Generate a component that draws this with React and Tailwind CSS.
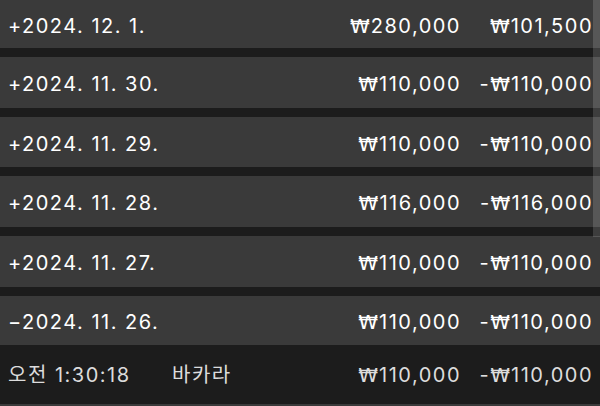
import React from 'react';

const rows = [
  { date: '+2024. 12. 1.', bet: '280,000', result: '101,500', neg: false, h: 'h-[48px]' },
  { date: '+2024. 11. 30.', bet: '110,000', result: '110,000', neg: true, h: 'h-[51px]' },
  { date: '+2024. 11. 29.', bet: '110,000', result: '110,000', neg: true, h: 'h-[50px]' },
  { date: '+2024. 11. 28.', bet: '116,000', result: '116,000', neg: true, h: 'h-[51px]' },
  { date: '+2024. 11. 27.', bet: '110,000', result: '110,000', neg: true, h: 'h-[51px]' },
  { date: '−2024. 11. 26.', bet: '110,000', result: '110,000', neg: true, h: 'h-[49px]' },
];

const font = { fontFamily: 'Inter, "Noto Sans CJK KR", sans-serif' };

const Won = () => (
  <span className="font-['DejaVu_Sans'] tracking-normal mr-[1px]">₩</span>
);

const Amounts = ({ bet, result, neg }) => (
  <>
    <div className="w-[130px] text-right">
      <Won />
      {bet}
    </div>
    <div className="w-[139px] pr-[7px] text-right">
      {neg ? '-' : ''}
      <Won />
      {result}
    </div>
  </>
);

export default function App() {
  return (
    <div
      className="relative w-[600px] h-[406px] overflow-hidden bg-[#1c1c1c] text-[20px] tracking-[1.5px]"
      style={font}
    >
      <div className="flex flex-col gap-[9px]">
        {rows.map((r, i) => (
          <div
            key={i}
            className={`${r.h} flex items-center pl-[8px] pt-[3px] bg-[#3a3a3a] text-white`}
          >
            <div className="flex-1">{r.date}</div>
            <Amounts bet={r.bet} result={r.result} neg={r.neg} />
          </div>
        ))}
      </div>

      {/* Expanded detail row */}
      <div className="h-[59px] flex items-center pl-[8px] text-[#dcdcdc]">
        <div className="w-[164px]">오전 1:30:18</div>
        <div className="flex-1">바카라</div>
        <Amounts bet="110,000" result="110,000" neg />
      </div>
      <div className="h-[3px] bg-[#3a3a3a]" />

      {/* scrollbar thumb */}
      <div className="absolute right-0 top-0 w-[7px] h-[237px] bg-white/15" />
    </div>
  );
}
